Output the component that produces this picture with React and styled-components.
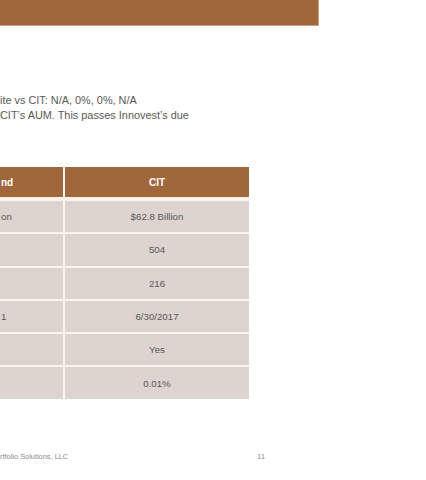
import React from "react";
import styled, { createGlobalStyle } from "styled-components";

const GlobalStyle = createGlobalStyle`
  html, body {
    margin: 0;
    padding: 0;
    background: #ffffff;
  }
  body {
    font-family: "Liberation Sans", Arial, sans-serif;
  }
`;

const Slide = styled.div`
  width: 426px;
  height: 480px;
  overflow: hidden;
  background: #ffffff;
  display: flex;
  flex-direction: column;
`;

const TopBar = styled.div`
  width: 318px;
  height: 25px;
  background: #a0673a;
  border-bottom: 1px solid #c9a383;
  border-right: 1px solid #c9a383;
`;

const Bullets = styled.div`
  margin-top: 67px;
  color: #595959;
  font-size: 10.9px;
  line-height: 15px;
`;

const Line = styled.div`
  white-space: nowrap;
`;

const Table = styled.div`
  margin-top: 44px;
  width: 249px;
  display: grid;
  grid-template-columns: 63px 184px;
  column-gap: 2px;
  background: #fbf3ec;
`;

const HeadCell = styled.div`
  height: 30px;
  margin-bottom: 4px;
  background: #a0673a;
  color: #ffffff;
  font-weight: bold;
  font-size: 10px;
  display: flex;
  align-items: center;
  justify-content: ${(p) => (p.left ? "flex-start" : "center")};
  padding-left: ${(p) => (p.left ? "1px" : "0")};
`;

const Cell = styled.div`
  height: ${(p) => (p.last ? "32px" : "31.3px")};
  margin-bottom: ${(p) => (p.last ? "0" : "2px")};
  background: #ddd3cf;
  color: #595959;
  font-size: 9.7px;
  display: flex;
  align-items: center;
  justify-content: ${(p) => (p.left ? "flex-start" : "center")};
  padding-left: ${(p) => (p.left ? "1px" : "0")};
`;

const Footer = styled.div`
  margin-top: 53px;
  width: 265px;
  display: flex;
  justify-content: space-between;
  color: #8c8c8c;
  font-size: 7.4px;
`;

const rows = [
  ["on", "$62.8 Billion"],
  ["", "504"],
  ["", "216"],
  ["1", "6/30/2017"],
  ["", "Yes"],
  ["", "0.01%"],
];

export default function App() {
  return (
    <>
      <GlobalStyle />
      <Slide>
        <TopBar />
        <Bullets>
          <Line>ite vs CIT: N/A, 0%, 0%, N/A</Line>
          <Line>CIT’s AUM. This passes Innovest’s due</Line>
        </Bullets>
        <Table>
          <HeadCell left>nd</HeadCell>
          <HeadCell>CIT</HeadCell>
          {rows.map((r, i) => (
            <React.Fragment key={i}>
              <Cell left last={i === rows.length - 1}>
                {r[0]}
              </Cell>
              <Cell last={i === rows.length - 1}>{r[1]}</Cell>
            </React.Fragment>
          ))}
        </Table>
        <Footer>
          <span>rtfolio Solutions, LLC</span>
          <span>11</span>
        </Footer>
      </Slide>
    </>
  );
}
